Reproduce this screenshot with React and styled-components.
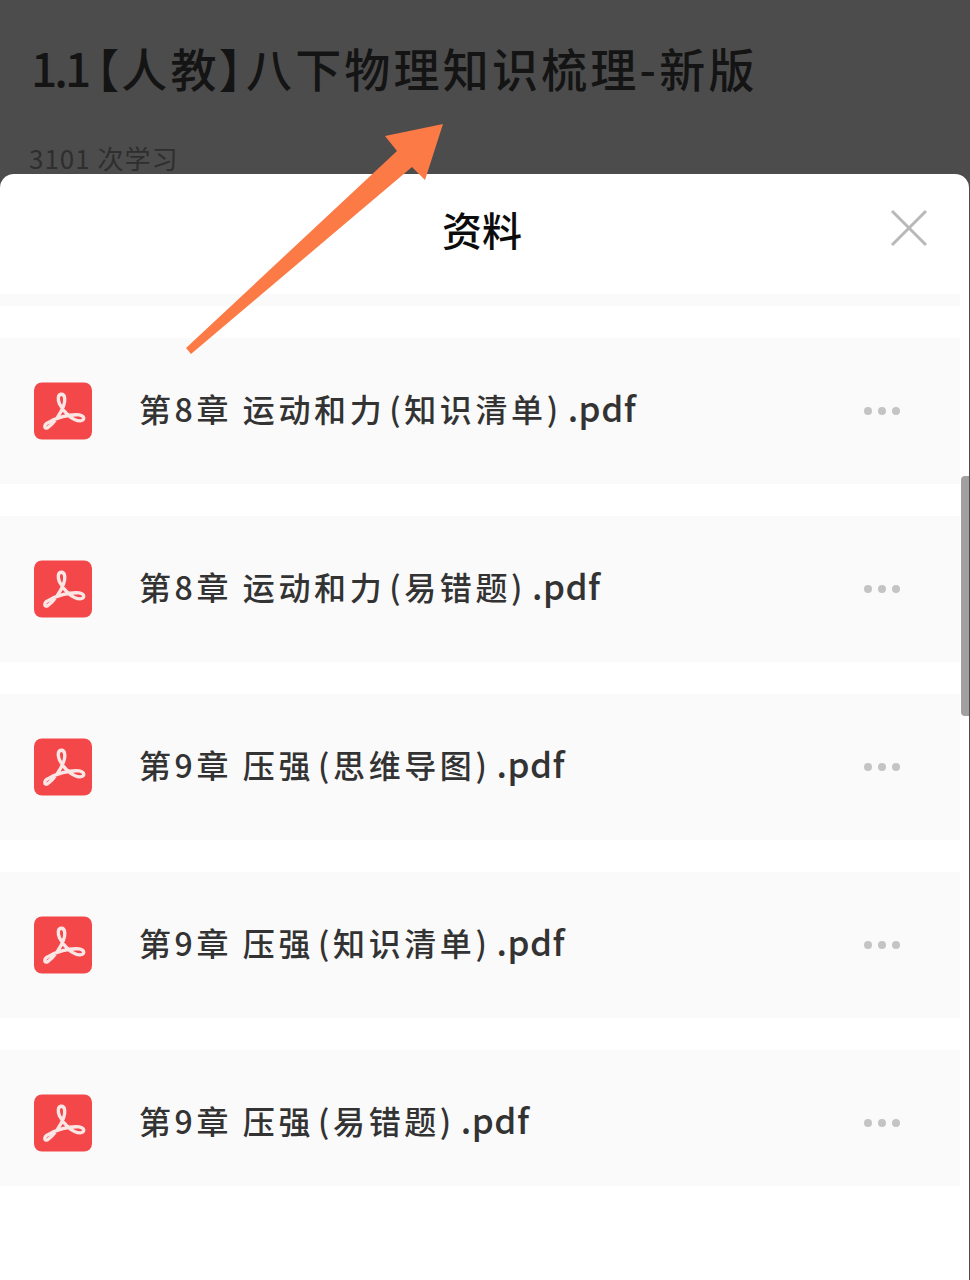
import React from "react";
import styled, { createGlobalStyle } from "styled-components";

const GlobalStyle = createGlobalStyle`
  html, body {
    margin: 0;
    padding: 0;
    background: #4c4c4c;
  }
  body {
    font-family: "Noto Sans CJK SC", "Noto Sans", sans-serif;
  }
`;

const Page = styled.div`
  position: relative;
  width: 970px;
  height: 1280px;
  overflow: hidden;
  display: flex;
  flex-direction: column;
  background: #4c4c4c;
`;

const Course = styled.div`
  height: 174px;
  flex: none;
  box-sizing: border-box;
  padding: 32px 0 0 31px;
`;

const CourseTitle = styled.h1`
  margin: 0;
  font-size: 46px;
  line-height: 70px;
  font-weight: 500;
  letter-spacing: 3.2px;
  font-feature-settings: "palt";
  color: #141414;
  white-space: nowrap;
`;

const Version = styled.span`
  letter-spacing: -3px;
  margin-right: 7px;
`;

const Views = styled.div`
  margin-top: 38px;
  margin-left: -2px;
  font-size: 26px;
  line-height: 36px;
  letter-spacing: 1px;
  color: #2e2e2e;
`;

const Sheet = styled.div`
  position: relative;
  flex: 1;
  background: #fff;
  border-radius: 14px 14px 0 0;
  margin-right: 1px;
  overflow: hidden;
`;

const SheetHeader = styled.div`
  height: 120px;
  display: flex;
  align-items: center;
  justify-content: center;
  position: relative;
`;

const SheetTitle = styled.h2`
  margin: 0 5px 11px 0;
  font-size: 40px;
  line-height: 56px;
  font-weight: 500;
  color: #0c0c0c;
`;

const Close = styled.svg`
  position: absolute;
  right: 41px;
  top: 35px;
  width: 38px;
  height: 38px;
`;

const List = styled.div`
  display: flex;
  flex-direction: column;
  gap: 32px;
`;

const PeekRow = styled.div`
  height: 12px;
  margin-right: 9px;
  background: #fafafa;
`;

const Row = styled.div`
  height: ${(p) => p.$height || 146}px;
  margin-right: 9px;
  background: #fafafa;
  overflow: hidden;
`;

const RowBody = styled.div`
  height: 146px;
  box-sizing: border-box;
  padding: 0 60px 0 34px;
  display: flex;
  align-items: center;
`;

const PdfBadge = styled.svg`
  width: 58px;
  height: 58px;
  flex: none;
`;

const FileName = styled.div`
  flex: 1;
  margin: 0 0 8px 47px;
  font-size: 32px;
  line-height: 44px;
  font-weight: 500;
  letter-spacing: 3.6px;
  color: #333;
  white-space: nowrap;
`;

const Note = styled.span`
  margin-left: 4px;
`;

const Ext = styled.span`
  margin-left: 6px;
  font-size: 35px;
  letter-spacing: 0.5px;
`;

const More = styled.div`
  display: flex;
  gap: 6px;
`;

const Dot = styled.span`
  width: 8px;
  height: 8px;
  border-radius: 50%;
  background: #c4c4c4;
`;

const Scrollbar = styled.div`
  position: absolute;
  right: 0;
  top: 302px;
  width: 8px;
  height: 240px;
  border-radius: 4px 0 0 4px;
  background: #a0a0a0;
`;

const Arrow = styled.svg`
  position: absolute;
  left: 0;
  top: 0;
  width: 970px;
  height: 400px;
  pointer-events: none;
`;

const files = [
  { chapter: "第8章 运动和力", note: "知识清单" },
  { chapter: "第8章 运动和力", note: "易错题" },
  { chapter: "第9章 压强", note: "思维导图" },
  { chapter: "第9章 压强", note: "知识清单" },
  { chapter: "第9章 压强", note: "易错题", height: 136 },
];

const AcrobatIcon = () => (
  <PdfBadge viewBox="0 0 59 58">
    <rect x="0" y="0" width="59" height="58" rx="8" fill="#f4474a" />
    <path
      d="M28 12C32 12 32 19 30 24C27 32 20 42 14 46C10 48 10 43 14 41C22 36 36 32 46 33C52 34 52 39 47 39C39 39 30 30 26 22C24 17 24 12 28 12Z"
      fill="none"
      stroke="#fbe6e6"
      strokeWidth="3.4"
      strokeLinejoin="round"
    />
  </PdfBadge>
);

export default function App() {
  return (
    <Page>
      <GlobalStyle />
      <Course>
        <CourseTitle>
          <Version>1.1</Version>【人教】八下物理知识梳理-新版
        </CourseTitle>
        <Views>3101 次学习</Views>
      </Course>
      <Sheet>
        <SheetHeader>
          <SheetTitle>资料</SheetTitle>
          <Close viewBox="0 0 38 38">
            <path d="M2 2l34 34M36 2L2 36" stroke="#b8b8b8" strokeWidth="3" fill="none" />
          </Close>
        </SheetHeader>
        <List>
          <PeekRow />
          {files.map((file) => (
            <Row key={file.chapter + file.note} $height={file.height}>
              <RowBody>
                <AcrobatIcon />
                <FileName>
                  {file.chapter}
                  <Note>({file.note})</Note>
                  <Ext>.pdf</Ext>
                </FileName>
                <More>
                  <Dot />
                  <Dot />
                  <Dot />
                </More>
              </RowBody>
            </Row>
          ))}
        </List>
        <Scrollbar />
      </Sheet>
      <Arrow viewBox="0 0 970 400">
        <polygon
          points="186,348 191,354 412,167 425,180 443,124 385,136 397,151"
          fill="#fb7a45"
        />
      </Arrow>
    </Page>
  );
}
